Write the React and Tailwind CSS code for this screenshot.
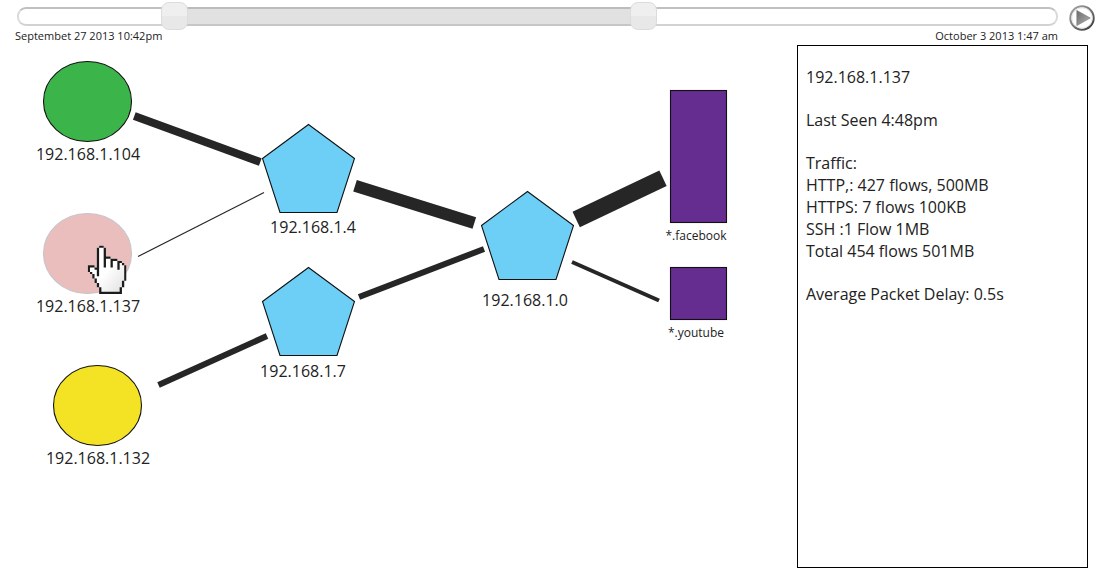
import React, { useState } from "react";

const RANGE_CLASS =
  "pointer-events-none absolute inset-0 m-0 h-7 w-full appearance-none bg-transparent outline-none " +
  "[&::-webkit-slider-runnable-track]:h-7 [&::-webkit-slider-runnable-track]:bg-transparent " +
  "[&::-webkit-slider-thumb]:pointer-events-auto [&::-webkit-slider-thumb]:h-7 [&::-webkit-slider-thumb]:w-[27px] " +
  "[&::-webkit-slider-thumb]:appearance-none [&::-webkit-slider-thumb]:rounded-[8px] [&::-webkit-slider-thumb]:border " +
  "[&::-webkit-slider-thumb]:border-[#dcdcdc] [&::-webkit-slider-thumb]:bg-linear-to-b [&::-webkit-slider-thumb]:from-[#efefef] " +
  "[&::-webkit-slider-thumb]:from-50% [&::-webkit-slider-thumb]:to-[#e8e8e8] [&::-webkit-slider-thumb]:to-50%";

function TimeRange() {
  const [start, setStart] = useState(142);
  const [end, setEnd] = useState(605);
  return (
    <div className="relative h-7">
      <div className="absolute inset-x-0 top-[5px] h-[19px] rounded-[9px] border-2 border-t-[#c0c0c0] border-x-[#dadada] border-b-[#d2d2d2] bg-white" />
      <div className="absolute inset-x-[13px] top-[5px] h-[19px]">
        <div
          className="absolute inset-y-0 border-y-2 border-t-[#bcbcbc] border-b-[#c6c6c6] bg-[#e1e1e1]"
          style={{ left: `${start / 10}%`, right: `${100 - end / 10}%` }}
        />
      </div>
      <input
        type="range"
        aria-label="Range start"
        min="0"
        max="1000"
        value={start}
        onChange={(e) => setStart(Math.min(Number(e.target.value), end))}
        className={RANGE_CLASS}
      />
      <input
        type="range"
        aria-label="Range end"
        min="0"
        max="1000"
        value={end}
        onChange={(e) => setEnd(Math.max(Number(e.target.value), start))}
        className={RANGE_CLASS}
      />
    </div>
  );
}

function PlayIcon() {
  return (
    <svg viewBox="0 0 28 28" className="block size-7" aria-hidden="true">
      <defs>
        <linearGradient id="ring" x1="0" y1="0" x2="1" y2="1">
          <stop offset="0" stopColor="#a8a8a8" />
          <stop offset="0.5" stopColor="#777777" />
          <stop offset="1" stopColor="#333333" />
        </linearGradient>
        <linearGradient id="arrow" x1="0" y1="0" x2="1" y2="1">
          <stop offset="0" stopColor="#6a6a6a" />
          <stop offset="1" stopColor="#b5b5b5" />
        </linearGradient>
      </defs>
      <circle cx="14" cy="14" r="11.7" fill="#fff" stroke="url(#ring)" strokeWidth="2" />
      <circle cx="14" cy="14" r="10.2" fill="none" stroke="#dedede" strokeWidth="0.8" />
      <path d="M8.8 6.4 22.3 14 8.8 21.6Z" fill="url(#arrow)" stroke="#777" strokeWidth="0.6" />
    </svg>
  );
}

const LINKS = [
  { from: [134.3, 71], to: [260.3, 117], width: 8 },
  { from: [138, 211.5], to: [264, 147.5], width: 1.2 },
  { from: [158.5, 340], to: [267, 291], width: 6 },
  { from: [355, 140.7], to: [474.3, 178], width: 12 },
  { from: [359, 252], to: [484, 204], width: 6 },
  { from: [576.2, 174.5], to: [663, 133.2], width: 17 },
  { from: [572, 217], to: [659, 255.5], width: 4 },
];

const PENTAGONS = [
  [308.5, 79.5],
  [308.5, 222.5],
  [527.5, 146.5],
];

const HAND = [
  "     XX          ",
  "    X..X         ",
  "    X..X         ",
  "    X..X         ",
  "    X..X         ",
  "    X..XXX       ",
  "    X..X..XXX    ",
  "    X..X..X..XX  ",
  "    X..X..X..X.X ",
  "XXX X..X..X..X..X",
  "X..XX........X..X",
  "X...X...........X",
  " X..X...........X",
  "  X.X...........X",
  "  X.............X",
  "   X............X",
  "   X...........X ",
  "    X..........X ",
  "    X..........X ",
  "     X........X  ",
  "     X........X  ",
  "     XXXXXXXXXX  ",
];

const cellPath = (test) =>
  HAND.flatMap((row, y) => [...row].map((c, x) => (test(c) ? `M${x} ${y}h1v1h-1z` : ""))).join("");

function HandPointer() {
  return (
    <svg
      x="87.7"
      y="200.5"
      width="38.8"
      height="48.4"
      viewBox="0 0 17 22"
      preserveAspectRatio="none"
    >
      <defs>
        <linearGradient id="palm" x1="0" y1="0" x2="1" y2="1">
          <stop offset="0.5" stopColor="#ffffff" />
          <stop offset="1" stopColor="#dddddd" />
        </linearGradient>
      </defs>
      <path d={cellPath((c) => c !== " ")} fill="url(#palm)" />
      <path d={cellPath((c) => c === "X")} fill="#1c1c1c" />
    </svg>
  );
}

const LABELS = [
  { text: "192.168.1.104", place: "left-[88px] top-[98px]" },
  { text: "192.168.1.137", place: "left-[88px] top-[250px]" },
  { text: "192.168.1.132", place: "left-[98px] top-[402px]" },
  { text: "192.168.1.4", place: "left-[313px] top-[171px]" },
  { text: "192.168.1.7", place: "left-[303px] top-[315px]" },
  { text: "192.168.1.0", place: "left-[525px] top-[244px]" },
];

const SITES = [
  { text: "*.facebook", place: "left-[696px] top-[181px]" },
  { text: "*.youtube", place: "left-[696px] top-[278px]" },
];

function NetworkMap() {
  return (
    <section aria-label="Network map" className="relative min-h-[440px] min-w-[760px] flex-1">
      <svg viewBox="0 0 760 440" className="block h-[440px] w-[760px]" aria-hidden="true">
        {LINKS.map(({ from, to, width }, i) => (
          <line key={i} x1={from[0]} y1={from[1]} x2={to[0]} y2={to[1]} stroke="#262626" strokeWidth={width} />
        ))}
        <g stroke="#111" strokeWidth="1.1">
          <ellipse cx="87.5" cy="56.5" rx="44" ry="40" fill="#3bb54a" />
          <ellipse cx="87.5" cy="208.5" rx="44" ry="40" fill="#ebbebe" stroke="#c4c4c8" />
          <ellipse cx="97.5" cy="360.5" rx="44" ry="40" fill="#f4e324" />
          {PENTAGONS.map(([x, y]) => (
            <path key={`${x}-${y}`} d={`M${x} ${y}l46 34-17.5 54h-57l-17.5-54z`} fill="#6dcff6" />
          ))}
          <rect x="670.5" y="45.5" width="56" height="132" fill="#662d91" />
          <rect x="670.5" y="222.5" width="56" height="52" fill="#662d91" />
        </g>
        <HandPointer />
      </svg>
      {LABELS.map(({ text, place }) => (
        <span key={text} className={`absolute -translate-x-1/2 text-base/[22px] whitespace-nowrap ${place}`}>
          {text}
        </span>
      ))}
      {SITES.map(({ text, place }) => (
        <span key={text} className={`absolute -translate-x-1/2 text-[12px]/5 whitespace-nowrap ${place}`}>
          {text}
        </span>
      ))}
    </section>
  );
}

function DetailsPanel() {
  return (
    <aside className="mr-3.5 w-[291px] shrink-0 border border-black px-2 py-5 text-base/[22px]">
      <h1>192.168.1.137</h1>
      <p className="mt-[21px]">Last Seen 4:48pm</p>
      <h2 className="mt-[21px]">Traffic:</h2>
      <ul>
        <li>HTTP,: 427 flows, 500MB</li>
        <li>HTTPS: 7 flows 100KB</li>
        <li>SSH :1 Flow 1MB</li>
        <li>Total 454 flows 501MB</li>
      </ul>
      <p className="mt-[21px]">Average Packet Delay: 0.5s</p>
    </aside>
  );
}

export default function App() {
  return (
    <div className="flex min-h-screen flex-col bg-white pb-4 font-['Open_Sans','Noto_Sans',sans-serif] text-[#222]">
      <header className="flex items-start gap-2.5 pt-0.5 pr-1.5 pl-[17px]">
        <div className="flex-1">
          <TimeRange />
          <div className="-ml-0.5 flex justify-between text-[11px]/[11px]">
            <span>Septembet 27 2013 10:42pm</span>
            <span>October 3 2013 1:47 am</span>
          </div>
        </div>
        <button type="button" aria-label="Play" className="mt-0.5 cursor-pointer rounded-full">
          <PlayIcon />
        </button>
      </header>
      <main className="mt-1 flex flex-1">
        <NetworkMap />
        <DetailsPanel />
      </main>
    </div>
  );
}
